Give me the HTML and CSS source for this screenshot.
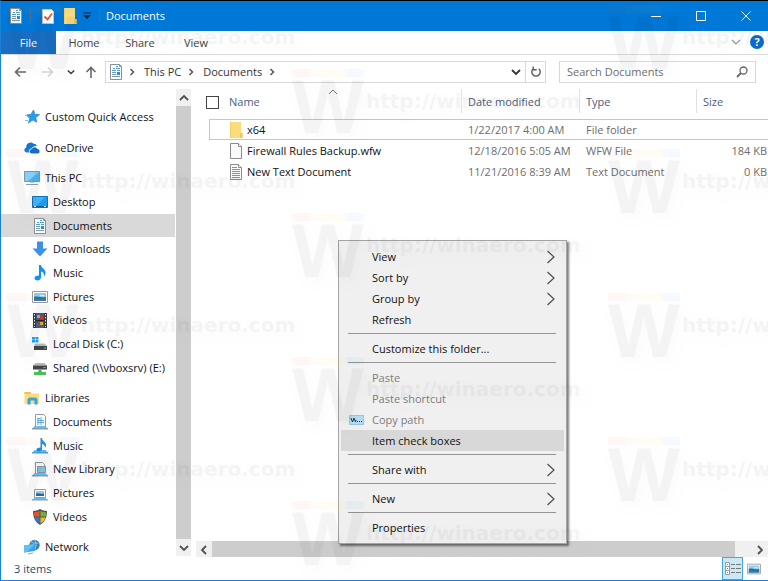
FILE: index.html
```html
<!DOCTYPE html>
<html lang="en">
<head>
  <meta charset="UTF-8" />
  <meta name="viewport" content="width=device-width, initial-scale=1.0"/>
  <title>Documents</title>
  <link rel="stylesheet" href="styles.css">
</head>
<body>
  <svg class="sprite" aria-hidden="true">
    <symbol id="doc" viewBox="0 0 16 16">
      <path d="M2.5.5h9l2 2v13h-11z" fill="#fbfbfb" stroke="#8a8f93"/>
      <path d="M11.500.5v2h2" fill="none" stroke="#8a8f93"/>
      <path d="M5 4.500h2M8 2.500h2M8 4.500h4M4 6.500h4M9 6.500h3" stroke="#4aa3dc"/>
      <path d="M9 8h3v3H9z" fill="#2f8fd0"/>
      <path d="M4 8.500h4M4 10.500h4M4 12.500h8" stroke="#7f99aa"/>
    </symbol>
    <symbol id="page" viewBox="0 0 16 16">
      <path d="M2.500.5h8l3 3v12h-11z" fill="#fafafa" stroke="#8c8c8c"/>
      <path d="M10.500.5v3h3" fill="#fff" stroke="#8c8c8c"/>
    </symbol>
    <symbol id="text" viewBox="0 0 16 16">
      <path d="M2.500.5h8l3 3v12h-11z" fill="#fafafa" stroke="#8c8c8c"/>
      <path d="M10.500.5v3h3" fill="#fff" stroke="#8c8c8c"/>
      <path d="M4 3.500h5M4 5.500h8M4 7.500h8M4 9.500h8M4 11.500h8M4 13.500h8" stroke="#8f8f8f"/>
    </symbol>
    <symbol id="folder" viewBox="0 0 16 16">
      <path d="M2 0h11v11h1.500v5H2z" fill="#fbdc7c"/>
      <path d="M12 11h2.500v5H12z" fill="#f0c95a"/>
      <path d="M2 0h1v16H2z" fill="#f3cf68"/>
    </symbol>
    <symbol id="checked" viewBox="0 0 16 16">
      <path d="M2.500 1.500h9l2 2v12h-11z" fill="#fff" stroke="#c5c5c5"/>
      <path d="M4.500 8.500l3 3L12 5.500" fill="none" stroke="#e8592b" stroke-width="1.800"/>
    </symbol>
    <symbol id="star" viewBox="0 0 16 16">
      <path d="M9.500 1l1.300 4.500 4.700.2-3.800 2.800 1 4.700-3.700-2.300L4.500 14l1.300-4.600L2.500 6l4.500-.5z" fill="#2e9bea" stroke="#2e9bea"/>
      <path d="M1 6.500h2M1 11.500h3" stroke="#7fc0f2"/>
    </symbol>
    <symbol id="cloud" viewBox="0 0 16 16">
      <path d="M2.500 12.500a2.600 2.600 0 0 1-.2-5.100A4.300 4.300 0 0 1 9.600 3.800a3.300 3.300 0 0 1 3.300 2.100c-3-.2-4.800 1-5.200 2.600C5.600 8.600 4.400 10.300 5 12.500z" fill="#1477cf"/>
      <path d="M7.500 13.500a2.100 2.100 0 0 1 .3-4.200 3 3 0 0 1 5.500-.3 2.300 2.300 0 0 1 .7 4.500z" fill="#0f6cc4"/>
    </symbol>
    <symbol id="pc" viewBox="0 0 16 16">
      <path d="M.5 1.500h15v10H.5z" fill="#4fb5ee" stroke="#7d98a8"/>
      <path d="M1 2h14L4 11H1z" fill="#86d0f8"/>
      <path d="M2 14.500h12" stroke="#8aa4b3"/>
      <path d="M6 12.500h4" stroke="#c2d4de"/>
    </symbol>
    <symbol id="desktop" viewBox="0 0 16 16">
      <path d="M.5 2.500h15v11H.5z" fill="#1c9df0" stroke="#1470b8"/>
      <path d="M1 3h12L4 12H1z" fill="#45b4f7"/>
      <path d="M1 12.500h14" stroke="#0e609f"/>
      <path d="M2 12.500h2M12 12.500h2" stroke="#d6ecfb"/>
    </symbol>
    <symbol id="down" viewBox="0 0 16 16">
      <path d="M5 .5h6v7h4.500L8 15.500.5 7.500H5z" fill="#3b92e4"/>
    </symbol>
    <symbol id="note" viewBox="0 0 16 16">
      <path d="M7 0h2c0 3 4.500 4 4.500 7.500 0 1.500-.5 2.500-1.500 4 .3-3-1-4.500-3-5V12c0 2-1.500 3.500-3.500 3.500S2.500 14.500 2.500 13 4 10.500 7 10.500z" fill="#1291ea"/>
    </symbol>
    <symbol id="picture" viewBox="0 0 16 16">
      <path d="M.5 2.500h15v11H.5z" fill="#fff" stroke="#9a9a9a"/>
      <path d="M2 4h12v8H2z" fill="#8fcdf5"/>
      <path d="M2 8c3-1.500 5 1 12 0v4H2z" fill="#2d7087"/>
      <path d="M2 10.500c4-1 8 .5 12 0V12H2z" fill="#3b79be"/>
      <path d="M8 6.500h4" stroke="#e8f6ff"/>
    </symbol>
    <symbol id="film" viewBox="0 0 16 16">
      <path d="M1 1h14v15H1z" fill="#3a3a3a"/>
      <path d="M4 1h8v15H4z" fill="#35639f"/>
      <path d="M5 3h3v3H5zM8 10h3v3H8z" fill="#e6a72e"/>
      <path d="M8 4h3v3H8zM5 11h3v3H5z" fill="#c93a2e"/>
      <path d="M4 8.500h8" stroke="#222"/>
      <path d="M2.500 2v13M13.500 2v13" stroke="#eee" stroke-dasharray="1.500 1.500"/>
    </symbol>
    <symbol id="disk" viewBox="0 0 16 16">
      <path d="M0 1h3v2.500H0zM3.500 1h3v2.500h-3zM0 4h3v2.500H0zM3.500 4h3v2.500h-3z" fill="#1ca3ee"/>
      <path d="M3.500 7.500h9L15 10H2z" fill="#b5b9bc"/>
      <path d="M2 10h13v4H2z" fill="#414649"/>
      <path d="M12 12h2" stroke="#44e05a"/>
    </symbol>
    <symbol id="share" viewBox="0 0 16 16">
      <path d="M3.500 3h9L15 5.500H1z" fill="#b5b9bc"/>
      <path d="M1 5.500h14v4H1z" fill="#414649"/>
      <path d="M11.500 7.500h2" stroke="#44e05a"/>
      <path d="M6.500 10h3v2h-3z" fill="#3ca64a"/>
      <path d="M2 12h12v3H2z" fill="#4dbd5a"/>
    </symbol>
    <symbol id="libraries" viewBox="0 0 16 16">
      <path d="M.5 2h6l1 1.500H15V14H.5z" fill="#fbdc7c"/>
      <path d="M.5 2h6v2h-6z" fill="#eec255"/>
      <path d="M3.500 14.500V9.500l1.500-2h7l1.500 2v5h-3v-4h-4v4z" fill="#35a5e0"/>
    </symbol>
    <symbol id="lib-doc" viewBox="0 0 16 16">
      <path d="M3.500.5h8l2 2V13h-10z" fill="#fbfbfb" stroke="#949a9f"/>
      <path d="M5 4.500h3M9 3v8M5 6.500h7M5 8.500h7M6 4v7" stroke="#5aaade"/>
      <path d="M2.500 12h11l2.500 3H0z" fill="#66bdf0"/>
      <path d="M0 14h16v1.500H0z" fill="#8f9ba5"/>
    </symbol>
    <symbol id="lib-note" viewBox="0 0 16 16">
      <path d="M2.500 12h11l2.500 3H0z" fill="#66bdf0"/>
      <path d="M0 14h16v1.500H0z" fill="#4ea3dc"/>
      <path d="M8.500 0H10c0 3 4 4 4 7 0 1.500-.5 2-1 3 0-2.500-1-3.500-3-4v5c0 1.500-1.500 2.500-3 2.500s-2.500-.8-2.500-2S6 9.500 8.500 9.500z" fill="#1291ea"/>
    </symbol>
    <symbol id="lib-new" viewBox="0 0 16 16">
      <path d="M3.500 1.500h7l2 2v9h-9z" fill="#fafafa" stroke="#8d9499"/>
      <path d="M5.500 5.500h8v6h-8z" fill="#79c4ee" stroke="#8d9499"/>
      <path d="M2.500 12h11l2.500 3H0z" fill="#66bdf0"/>
      <path d="M0 14h16v1.500H0z" fill="#8f9ba5"/>
    </symbol>
    <symbol id="lib-pic" viewBox="0 0 16 16">
      <path d="M2.500 4.500h11v8h-11z" fill="#fff" stroke="#999"/>
      <path d="M4 6h8v5H4z" fill="#8fcdf5"/>
      <path d="M4 8.500c3-1 5 1 8 0V11H4z" fill="#2f6795"/>
      <path d="M2.500 13h11l2.500 2H0z" fill="#66bdf0"/>
      <path d="M0 14.500h16v1H0z" fill="#8f9ba5"/>
    </symbol>
    <symbol id="shield" viewBox="0 0 16 16">
      <path d="M8 0c2 1.300 4.500 2 7 2 0 6.500-2 11-7 14C3 13 1 8.500 1 2c2.500 0 5-.7 7-2z" fill="#55564f"/>
      <path d="M7.500 2v5.500H2.300C2 6 2 4.500 2 3.200 4 3.200 6 2.800 7.500 2z" fill="#e8502e"/>
      <path d="M8.500 2v5.500h5.200c.3-1.500.3-3 .3-4.300-2 0-4-.4-5.500-1.200z" fill="#74b32c"/>
      <path d="M7.500 8.500v6C5 13 3.200 11 2.500 8.500z" fill="#2382d4"/>
      <path d="M8.500 8.500v6c2.500-1.500 4.300-3.500 5-6z" fill="#f8bb20"/>
    </symbol>
    <symbol id="network" viewBox="0 0 16 16">
      <circle cx="10.500" cy="6" r="5.200" fill="#3a80b8"/>
      <path d="M7 3c3 2 5 1 7.500 1M10.500 1c2 3 2 6 0 10" fill="none" stroke="#9ccbea"/>
      <path d="M0 6.500L11 5v7L0 13.500z" fill="#38a4e4"/>
      <path d="M0 6.500L11 5 3 13 0 13.500z" fill="#62bff2"/>
      <path d="M4 15l5-1" stroke="#8aa4b3"/>
    </symbol>
    <symbol id="chevron" viewBox="0 0 8 8">
      <path d="M2.500 1l3 3-3 3" fill="none" stroke="currentColor" stroke-width="1.500"/>
    </symbol>
    <symbol id="chevron-down" viewBox="0 0 10 10">
      <path d="M1 3l4 4 4-4" fill="none" stroke="currentColor" stroke-width="1.800"/>
    </symbol>
    <symbol id="submenu" viewBox="0 0 8 14">
      <path d="M.5 1l6.500 6-6.500 6" fill="none" stroke="#4d4d4d" stroke-width="1.200"/>
    </symbol>
  </svg>

  <div class="window">
    <header class="titlebar">
      <svg class="icon"><use href="#doc"/></svg>
      <span class="bar-sep"></span>
      <button class="qat-btn" aria-label="Properties"><svg class="icon"><use href="#checked"/></svg></button>
      <button class="qat-btn" aria-label="New folder"><svg class="icon"><use href="#folder"/></svg></button>
      <button class="qat-btn qat-more" aria-label="Customize Quick Access Toolbar">
        <svg width="8" height="8" viewBox="0 0 8 8"><path d="M0 1h8" stroke="#10233a"/><path d="M0 3h8L4 7z" fill="#10233a"/></svg>
      </button>
      <span class="bar-sep"></span>
      <h1 class="title">Documents</h1>
      <div class="window-buttons">
        <button aria-label="Minimize"><svg width="12" height="12"><path d="M1 6.500h10" stroke="#fff"/></svg></button>
        <button aria-label="Maximize"><svg width="12" height="12"><path d="M1.500 1.500h9v9h-9z" fill="none" stroke="#fff"/></svg></button>
        <button aria-label="Close"><svg width="12" height="12"><path d="M1.500 1.500l9 9M10.500 1.500l-9 9" stroke="#fff"/></svg></button>
      </div>
    </header>

    <nav class="ribbon">
      <button class="tab file">File</button>
      <button class="tab">Home</button>
      <button class="tab">Share</button>
      <button class="tab">View</button>
      <button class="expand" aria-label="Expand the Ribbon"><svg width="10" height="10" viewBox="0 0 10 10"><path d="M1 3l4 4 4-4" fill="none" stroke="#9a9a9a" stroke-width="1.200"/></svg></button>
      <button class="help" aria-label="Help">?</button>
    </nav>

    <div class="address-row">
      <button class="nav-btn" aria-label="Back"><svg width="12" height="12"><path d="M12 6H1.500M6 1.500L1.500 6 6 10.500" fill="none" stroke="#6a6a6a" stroke-width="1.600"/></svg></button>
      <button class="nav-btn" aria-label="Forward"><svg width="12" height="12"><path d="M0 6h10.500M6 1.500L10.500 6 6 10.500" fill="none" stroke="#d2d2d2" stroke-width="1.600"/></svg></button>
      <button class="nav-btn small" aria-label="Recent locations"><svg width="8" height="8"><use href="#chevron-down"/></svg></button>
      <button class="nav-btn up" aria-label="Up"><svg width="12" height="12"><path d="M6 12V1.500M1.500 6L6 1.500 10.500 6" fill="none" stroke="#6a6a6a" stroke-width="1.600"/></svg></button>
      <div class="address">
        <svg class="icon"><use href="#doc"/></svg>
        <svg class="crumb-sep"><use href="#chevron"/></svg>
        <a href="#" class="crumb">This PC</a>
        <svg class="crumb-sep"><use href="#chevron"/></svg>
        <a href="#" class="crumb">Documents</a>
        <svg class="crumb-sep"><use href="#chevron"/></svg>
        <button class="history" aria-label="Previous locations"><svg width="10" height="10"><use href="#chevron-down"/></svg></button>
        <button class="refresh" aria-label="Refresh"><svg width="12" height="12"><path d="M3.200 2.800a4.200 4.200 0 1 0 5.600 0M3.200.500v3.300h3.500" fill="none" stroke="#5c5c5c" stroke-width="1.400"/></svg></button>
      </div>
      <div class="search">
        <input type="text" placeholder="Search Documents" aria-label="Search Documents">
        <svg width="12" height="12"><circle cx="7.500" cy="4.500" r="3.500" fill="none" stroke="#666" stroke-width="1.300"/><path d="M5 7L1 11" stroke="#666" stroke-width="1.800"/></svg>
      </div>
    </div>

    <div class="panes">
      <ul class="tree">
        <li><a href="#"><svg class="icon"><use href="#star"/></svg>Custom Quick Access</a></li>
        <li class="group"><a href="#"><svg class="icon"><use href="#cloud"/></svg>OneDrive</a></li>
        <li class="group"><a href="#"><svg class="icon"><use href="#pc"/></svg>This PC</a></li>
        <li class="child"><a href="#"><svg class="icon"><use href="#desktop"/></svg>Desktop</a></li>
        <li class="child current"><a href="#"><svg class="icon"><use href="#doc"/></svg>Documents</a></li>
        <li class="child"><a href="#"><svg class="icon"><use href="#down"/></svg>Downloads</a></li>
        <li class="child"><a href="#"><svg class="icon"><use href="#note"/></svg>Music</a></li>
        <li class="child"><a href="#"><svg class="icon"><use href="#picture"/></svg>Pictures</a></li>
        <li class="child"><a href="#"><svg class="icon"><use href="#film"/></svg>Videos</a></li>
        <li class="child"><a href="#"><svg class="icon"><use href="#disk"/></svg>Local Disk (C:)</a></li>
        <li class="child"><a href="#"><svg class="icon"><use href="#share"/></svg>Shared (\\vboxsrv) (E:)</a></li>
        <li class="group"><a href="#"><svg class="icon"><use href="#libraries"/></svg>Libraries</a></li>
        <li class="child"><a href="#"><svg class="icon"><use href="#lib-doc"/></svg>Documents</a></li>
        <li class="child"><a href="#"><svg class="icon"><use href="#lib-note"/></svg>Music</a></li>
        <li class="child"><a href="#"><svg class="icon"><use href="#lib-new"/></svg>New Library</a></li>
        <li class="child"><a href="#"><svg class="icon"><use href="#lib-pic"/></svg>Pictures</a></li>
        <li class="child"><a href="#"><svg class="icon"><use href="#shield"/></svg>Videos</a></li>
        <li class="group"><a href="#"><svg class="icon"><use href="#network"/></svg>Network</a></li>
      </ul>
      <div class="vscroll">
        <svg class="arrow flip"><use href="#chevron-down"/></svg>
        <div class="thumb"></div>
        <svg class="arrow"><use href="#chevron-down"/></svg>
      </div>

      <main class="content">
        <table class="files">
          <colgroup>
            <col class="col-indent"><col><col class="col-date"><col class="col-type"><col class="col-size">
          </colgroup>
          <thead>
            <tr>
              <th colspan="2" class="name-head">
                <label><input type="checkbox" class="check-all">Name</label>
                <svg class="sort" width="10" height="6"><path d="M1 5l4-4 4 4" fill="none" stroke="#777"/></svg>
              </th>
              <th>Date modified</th>
              <th>Type</th>
              <th>Size</th>
            </tr>
          </thead>
          <tbody>
            <tr class="focused">
              <td class="indent"></td>
              <td class="name"><svg class="icon"><use href="#folder"/></svg>x64</td>
              <td>1/22/2017 4:00 AM</td>
              <td>File folder</td>
              <td class="size"></td>
            </tr>
            <tr>
              <td class="indent"></td>
              <td class="name"><svg class="icon"><use href="#page"/></svg>Firewall Rules Backup.wfw</td>
              <td>12/18/2016 5:05 AM</td>
              <td>WFW File</td>
              <td class="size">184 KB</td>
            </tr>
            <tr>
              <td class="indent"></td>
              <td class="name"><svg class="icon"><use href="#text"/></svg>New Text Document</td>
              <td>11/21/2016 8:39 AM</td>
              <td>Text Document</td>
              <td class="size">0 KB</td>
            </tr>
          </tbody>
        </table>
        <div class="hscroll">
          <svg class="arrow left"><use href="#chevron-down"/></svg>
          <div class="thumb"></div>
          <svg class="arrow right"><use href="#chevron-down"/></svg>
        </div>
      </main>
    </div>

    <footer class="status">
      <span>3 items</span>
      <div class="views">
        <button class="active" aria-label="Details">
          <svg width="16" height="14"><path d="M.5.5h4v12h-4zM.5 4.500h4M.5 8.500h4" fill="#fff" stroke="#9a9a9a"/><path d="M2 2.500h1" stroke="#5a86c8"/><path d="M2 6.500h1M2 10.500h1" stroke="#d05a3a"/><path d="M6 2.500h4M11 2.500h5M6 6.500h4M11 6.500h5M6 10.500h4M11 10.500h5" stroke="#777"/></svg>
        </button>
        <button aria-label="Large icons"><svg width="14" height="14"><use href="#picture"/></svg></button>
      </div>
    </footer>
  </div>

  <div class="context-menu" role="menu">
    <button role="menuitem">View<svg class="more"><use href="#submenu"/></svg></button>
    <button role="menuitem">Sort by<svg class="more"><use href="#submenu"/></svg></button>
    <button role="menuitem">Group by<svg class="more"><use href="#submenu"/></svg></button>
    <button role="menuitem">Refresh</button>
    <hr>
    <button role="menuitem">Customize this folder...</button>
    <hr>
    <button role="menuitem" disabled>Paste</button>
    <button role="menuitem" disabled>Paste shortcut</button>
    <button role="menuitem" disabled class="with-icon"><svg width="15" height="10"><path d="M.5.500h14v9H.500z" fill="#b4dcf5" stroke="#8fc8ec"/><path d="M2 3l1.500 4L5 3l1.500 4L7 5M8 6.500h1M10 6.500h1M12 6.500h1" fill="none" stroke="#333"/></svg>Copy path</button>
    <button role="menuitem" class="hot">Item check boxes</button>
    <hr>
    <button role="menuitem">Share with<svg class="more"><use href="#submenu"/></svg></button>
    <hr>
    <button role="menuitem">New<svg class="more"><use href="#submenu"/></svg></button>
    <hr>
    <button role="menuitem">Properties</button>
  </div>

  <!-- watermark tiles, middle column is shifted down -->
  <div class="watermark" aria-hidden="true">
    <div class="wm-col">
      <div class="wm"><b>W</b><span>http://winaero.com</span></div>
      <div class="wm"><b>W</b><span>http://winaero.com</span></div>
      <div class="wm"><b>W</b><span>http://winaero.com</span></div>
      <div class="wm"><b>W</b><span>http://winaero.com</span></div>
    </div>
    <div class="wm-col shifted">
      <div class="wm"><b>W</b><span>http://winaero.com</span></div>
      <div class="wm"><b>W</b><span>http://winaero.com</span></div>
      <div class="wm"><b>W</b><span>http://winaero.com</span></div>
      <div class="wm"><b>W</b><span>http://winaero.com</span></div>
    </div>
    <div class="wm-col">
      <div class="wm"><b>W</b><span>http://winaero.com</span></div>
      <div class="wm"><b>W</b><span>http://winaero.com</span></div>
      <div class="wm"><b>W</b><span>http://winaero.com</span></div>
      <div class="wm"><b>W</b><span>http://winaero.com</span></div>
    </div>
  </div>
</body>
</html>
```

FILE: styles.css
```css
* {
  box-sizing: border-box;
}

html, body {
  margin: 0;
  padding: 0;
  height: 100%;
  overflow: hidden;
}

body {
  position: relative;
  background: #fff;
  color: #1a1a1a;
  font-family: "Open Sans", "Noto Sans", sans-serif;
  font-size: 11px;
  line-height: 16px;
}

button {
  margin: 0;
  padding: 0;
  border: none;
  background: none;
  color: inherit;
  font: inherit;
}

a {
  color: inherit;
  text-decoration: none;
}

.sprite {
  position: absolute;
  width: 0;
  height: 0;
}

.icon {
  width: 16px;
  height: 16px;
  flex: none;
}

.window {
  display: flex;
  flex-direction: column;
  height: 100%;
  border-top: 1px solid #000;
  border-left: 1px solid #1883d7;
  border-bottom: 1px solid #1883d7;
}

/* title bar */
.titlebar {
  display: flex;
  align-items: center;
  height: 30px;
  flex: none;
  padding-left: 7px;
  background: #0078d7;
  color: #fff;
}

.bar-sep {
  width: 1px;
  height: 12px;
  margin: 0 6px;
  background: #4a6f98;
}

.qat-btn {
  display: flex;
  width: 22px;
  justify-content: center;
}

.qat-more {
  width: 12px;
}

.title {
  margin: 0;
  font-size: 11px;
  font-weight: normal;
}

.window-buttons {
  display: flex;
  margin-left: auto;
}

.window-buttons button {
  display: flex;
  align-items: center;
  justify-content: center;
  width: 45px;
  height: 30px;
}

/* ribbon */
.ribbon {
  display: flex;
  align-items: stretch;
  height: 24px;
  flex: none;
  border-bottom: 1px solid #dadbdc;
}

.tab {
  width: 56px;
  color: #444;
}

.file {
  width: 55px;
  background: #1a6fc4;
  color: #fff;
}

.expand {
  margin-left: auto;
  padding: 0 9px;
}

.help {
  width: 14px;
  height: 14px;
  margin: 4px 4px 0 0;
  border-radius: 50%;
  background: #0a6cc8;
  color: #fff;
  font-size: 11px;
  font-weight: bold;
  line-height: 14px;
}

/* address bar */
.address-row {
  display: flex;
  align-items: center;
  height: 34px;
  flex: none;
  padding: 0 12px 0 5px;
  color: #3c3c3c;
}

.nav-btn {
  display: flex;
  justify-content: center;
  width: 28px;
}

.nav-btn.small {
  width: 18px;
}

.nav-btn.up {
  width: 22px;
  margin-right: 3px;
}

.address {
  display: flex;
  align-items: center;
  flex: 1;
  height: 22px;
  padding-left: 2px;
  border: 1px solid #d9d9d9;
  color: #333;
}

.address .icon {
  margin-right: -2px;
}

.crumb-sep {
  width: 8px;
  height: 8px;
  margin: 0 8px 0 6px;
  color: #555;
}

.history {
  display: flex;
  margin-left: auto;
  padding-right: 4px;
}

.refresh {
  display: flex;
  align-items: center;
  justify-content: center;
  width: 20px;
  height: 20px;
  border-left: 1px solid #d9d9d9;
}

.search {
  display: flex;
  align-items: center;
  width: 197px;
  height: 22px;
  margin-left: 13px;
  padding: 0 7px;
  border: 1px solid #d9d9d9;
}

.search input {
  flex: 1;
  min-width: 0;
  padding: 0;
  border: none;
  outline: none;
  background: none;
  font: inherit;
}

.search input::placeholder {
  color: #6d6d6d;
}

/* panes */
.panes {
  display: flex;
  flex: 1;
  min-height: 0;
}

.tree {
  display: flex;
  flex-direction: column;
  width: 174px;
  margin: 0 0 -2px;
  padding: 16px 0 0;
  list-style: none;
  color: #111;
}

.tree li {
  display: flex;
  flex: 1;
  padding-left: 23px;
  white-space: nowrap;
}

.tree .group {
  margin-top: 7px;
}

.tree .child {
  padding-left: 31px;
}

.tree .current {
  background: #d9d9d9;
}

.tree a {
  display: flex;
  align-items: center;
  gap: 5px;
}

.vscroll {
  display: flex;
  flex-direction: column;
  align-items: center;
  width: 15px;
  margin: 0 3px 1px 1px;
  background: #f0f0f0;
}

.thumb {
  flex: 1;
  align-self: stretch;
  background: #cdcdcd;
}

.arrow {
  width: 10px;
  height: 10px;
  margin: 4px 3px 3px;
  color: #505050;
}

.flip {
  transform: rotate(180deg);
}

.left {
  transform: rotate(90deg);
}

.right {
  transform: rotate(-90deg);
  margin-left: 20px;
}

.content {
  display: flex;
  flex-direction: column;
  flex: 1;
  min-width: 0;
}

.files {
  width: 100%;
  table-layout: fixed;
  border-spacing: 0;
  color: #6d6d6d;
}

.col-indent {
  width: 15px;
}

.col-date {
  width: 118px;
}

.col-type {
  width: 117px;
}

.col-size {
  width: 72px;
}

.files th {
  position: relative;
  height: 30px;
  padding: 5px 0 0 7px;
  background: linear-gradient(#e2e2e2, #e2e2e2) left top / 1px 24px no-repeat;
  color: #4c607a;
  font-weight: normal;
  text-align: left;
  vertical-align: top;
}

.files .name-head {
  padding-left: 12px;
  background: none;
}

.name-head label {
  display: flex;
  align-items: center;
  gap: 10px;
}

.check-all {
  appearance: none;
  width: 13px;
  height: 13px;
  margin: 0;
  border: 1px solid #444;
  background: #fff;
}

.sort {
  position: absolute;
  top: 0;
  left: 50%;
}

.files td {
  height: 21px;
  padding: 0 0 0 7px;
  border-top: 1px solid transparent;
  border-bottom: 1px solid transparent;
  white-space: nowrap;
}

.files .indent {
  padding: 0;
  border: none;
}

.files .name {
  padding-left: 18px;
  border-left: 1px solid transparent;
  color: #111;
}

.name .icon {
  margin-right: 3px;
  vertical-align: top;
}

.files .size {
  padding-right: 1px;
  text-align: right;
}

.files .focused td {
  border-color: #99d1ff;
}

.hscroll {
  display: flex;
  height: 16px;
  margin: auto 0 0 2px;
  background: #f0f0f0;
}

/* status bar */
.status {
  display: flex;
  align-items: center;
  justify-content: space-between;
  height: 23px;
  flex: none;
  padding-left: 13px;
  color: #2b4770;
}

.views {
  display: flex;
  padding-right: 4px;
}

.views button {
  display: flex;
  align-items: center;
  justify-content: center;
  width: 21px;
  height: 23px;
}

.views .active {
  border: 1px solid #3fa9e0;
  background: #cce8f6;
}

/* context menu */
.context-menu {
  position: absolute;
  top: 240px;
  left: 338px;
  width: 229px;
  padding: 5px 2px;
  border: 1px solid #a5a5a5;
  background: #f0f0f0;
  box-shadow: 2px 2px 2px rgba(0, 0, 0, 0.5);
  color: #111;
}

.context-menu button {
  display: flex;
  align-items: center;
  width: 100%;
  height: 21px;
  padding: 0 9px 0 31px;
}

.context-menu button:disabled {
  color: #7d7d7d;
}

.context-menu .with-icon {
  gap: 8px;
  padding-left: 8px;
}

.context-menu .hot {
  background: #d8d8d8;
}

.context-menu hr {
  height: 1px;
  margin: 3px 8px 4px 7px;
  border: none;
  background: #949494;
}

.more {
  width: 8px;
  height: 14px;
  margin-left: auto;
}

/* watermark */
.watermark {
  position: absolute;
  top: 0;
  left: 7px;
  right: 0;
  bottom: 0;
  display: grid;
  grid-template-columns: 285px 316px 1fr;
  overflow: hidden;
  opacity: 0.04;
  color: #000;
  font-weight: bold;
  pointer-events: none;
}

.wm-col {
  padding-top: 5px;
}

.shifted {
  padding-top: 69px;
}

.wm {
  display: flex;
  align-items: center;
  gap: 2px;
  height: 64px;
  margin-bottom: 80px;
  background: linear-gradient(90deg, #f50 0 18px, #fa3 18px 36px, #fc0 36px 54px, #09f 54px) left top / 72px 8px no-repeat;
}

.wm b {
  width: 72px;
  padding-top: 12px;
  font-family: "Liberation Sans", sans-serif;
  font-size: 76px;
  line-height: 52px;
  text-shadow: 4px 6px 8px rgba(0, 0, 0, 0.3);
}

.wm span {
  font-family: "DejaVu Sans", sans-serif;
  font-size: 20px;
  text-shadow: 4px 5px 8px rgba(0, 0, 0, 0.3);
}
```
